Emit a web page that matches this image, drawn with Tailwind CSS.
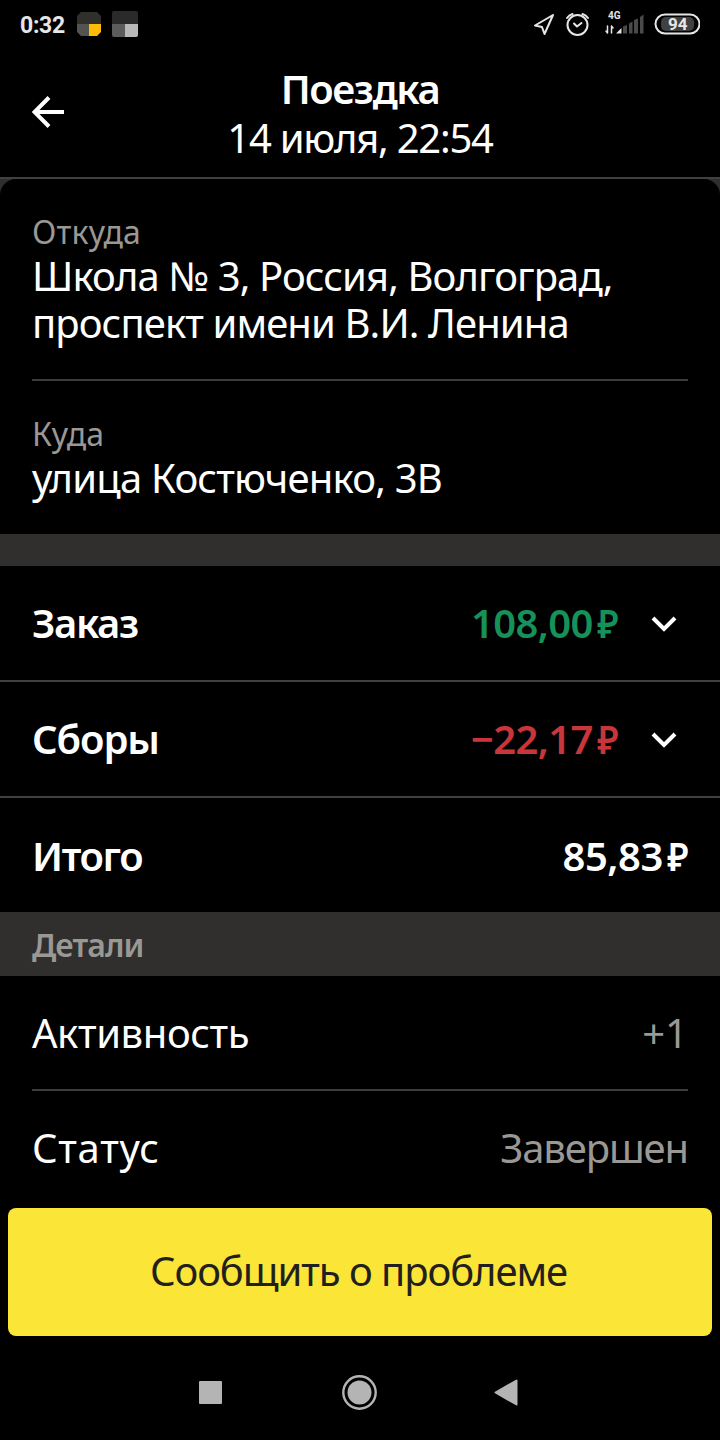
<!DOCTYPE html>
<html lang="ru">
  <head>
    <meta charset="UTF-8" />
    <meta name="viewport" content="width=device-width, initial-scale=1" />
    <title>Поездка</title>
    <script src="https://cdn.jsdelivr.net/npm/@tailwindcss/browser@4"></script>
  </head>
  <body
    class="bg-black text-white w-[720px] h-[1440px] overflow-hidden flex flex-col font-['Noto_Sans',sans-serif] text-[40px] leading-[48px]"
  >
    <!-- Status bar -->
    <div class="h-12 shrink-0 flex items-center justify-between pl-5 pr-5">
      <div class="flex items-center">
        <span
          class="w-[57px] font-['Roboto'] font-bold text-[23px] leading-6 tracking-[-0.3px] text-[#e6e6e6] pt-[3px]"
          >0:32</span
        >
        <svg class="w-6 h-6" viewBox="0 0 24 24">
          <clipPath id="app"><path d="M4 0 H20 L24 4 V20 L20 24 H4 L0 20 V4 Z" /></clipPath>
          <g clip-path="url(#app)">
            <rect width="24" height="12" fill="#302f2b" />
            <rect y="12" width="12" height="12" fill="#54534f" />
            <rect x="12" y="12" width="12" height="12" fill="#fdbb08" />
          </g>
        </svg>
        <svg class="ml-[11px] w-[26px] h-[26px]" viewBox="0 0 26 26">
          <clipPath id="app2"><rect width="26" height="26" rx="2" /></clipPath>
          <g clip-path="url(#app2)">
            <rect width="26" height="13" fill="#2a2a2a" />
            <rect y="13" width="13" height="13" fill="#5c5c5c" />
            <rect x="13" y="13" width="13" height="13" fill="#b8b8b8" />
          </g>
        </svg>
      </div>
      <svg
        class="w-[170px] h-12"
        viewBox="530 0 170 48"
        fill="none"
        stroke="#e6e6e6"
        stroke-width="2"
        stroke-linejoin="round"
        stroke-linecap="round"
      >
        <path d="M553 15 L535 25.5 L542 27 L544.5 34 Z" />
        <circle cx="577.5" cy="25" r="10" />
        <path d="M574 23.5 L577 26.5 L581.5 23" />
        <path d="M567 18 Q569 15 572.5 14 M582.5 14 Q586 15 588 18" />
        <g stroke-width="1.5">
          <path d="M607.5 26 V33 L606 31 M611.5 33 V26 L613 28" />
        </g>
        <path d="M616 33.5 L621.5 28 V33.5 Z" fill="#e6e6e6" stroke="none" />
        <g fill="#4a4a4a" stroke="none">
          <path d="M623 26.5 L627 25 V33.5 H623 Z" />
          <path d="M629 23.5 L632.5 21.5 V33.5 H629 Z" />
          <path d="M634 20 L638 18.5 V33.5 H634 Z" />
          <path d="M640 17 L643.5 14.5 V33.5 H640 Z" />
        </g>
        <rect x="655.5" y="14.5" width="44" height="19" rx="9.5" />
        <rect x="661" y="17" width="33" height="14" rx="5" fill="#404040" stroke="none" />
        <g fill="#e6e6e6" stroke="none" font-family="Roboto" font-weight="700">
          <text x="608" y="19" font-size="10">4G</text>
          <text x="668" y="30" font-size="17">94</text>
        </g>
      </svg>
    </div>

    <!-- Header -->
    <header
      class="h-[131px] shrink-0 border-b-2 border-[#404040] grid grid-cols-[96px_1fr_96px] items-center"
    >
      <svg
        class="ml-8 mb-0.5 w-8 h-8"
        viewBox="0 0 32 32"
        fill="none"
        stroke="white"
        stroke-width="4"
      >
        <path d="M32 16 H3 M17 1.5 L2.5 16 L17 30.5" />
      </svg>
      <div class="text-center pt-0.5">
        <h1 class="font-semibold tracking-[-1.4px]">Поездка</h1>
        <p class="tracking-[-1.25px] leading-[49px]">14 июля, 22:54</p>
      </div>
    </header>

    <!-- Addresses -->
    <div class="shrink-0 bg-[#302f2d] pb-8">
      <section class="h-[355px] bg-black rounded-t-[16px] px-8 pt-[33px]">
        <div class="h-[169px] border-b-2 border-[#3c3c3c]">
          <p class="text-[32px] leading-10 tracking-[0.15px] text-[#9a9894]">Откуда</p>
          <p class="leading-[47px] tracking-[-0.9px]">
            Школа № 3, Россия, Волгоград,<br />проспект имени В.И. Ленина
          </p>
        </div>
        <div class="pt-[33px]">
          <p class="text-[32px] leading-10 tracking-[0.15px] text-[#9a9894]">Куда</p>
          <p class="leading-[47px] tracking-[-0.8px]">улица Костюченко, 3В</p>
        </div>
      </section>
    </div>

    <!-- Totals -->
    <section class="shrink-0 font-semibold">
      <div class="h-[116px] border-b-2 border-[#404040] px-8 flex items-center">
        <span class="flex-1 tracking-[-1.4px]">Заказ</span>
        <span class="tracking-[-0.6px] text-[#16915a]"
          >108,00<span class="inline-block origin-right scale-x-90 ml-0.5">₽</span></span
        >
        <svg class="ml-[30px] mr-2 mt-0.5 w-8 h-8" viewBox="0 0 32 32" fill="none" stroke="white" stroke-width="4">
          <path d="M5 10 L16 21 L27 10" />
        </svg>
      </div>
      <div class="h-[116px] border-b-2 border-[#404040] px-8 flex items-center">
        <span class="flex-1 tracking-[-1.1px]">Сборы</span>
        <span class="tracking-[-0.6px] text-[#c8363a]"
          >−22,17<span class="inline-block origin-right scale-x-90 ml-0.5">₽</span></span
        >
        <svg class="ml-[30px] mr-2 mt-0.5 w-8 h-8" viewBox="0 0 32 32" fill="none" stroke="white" stroke-width="4">
          <path d="M5 10 L16 21 L27 10" />
        </svg>
      </div>
      <div class="h-[114px] px-8 pt-0.5 flex items-center">
        <span class="flex-1 tracking-[-1.4px]">Итого</span>
        <span class="tracking-[-0.5px]"
          >85,83<span class="inline-block origin-right scale-x-90 ml-0.5">₽</span></span
        >
      </div>
    </section>

    <!-- Details -->
    <h2
      class="h-16 shrink-0 bg-[#302f2d] px-8 pt-0.5 flex items-center text-[32px] font-semibold tracking-[-0.9px] text-[#9a9894]"
    >
      Детали
    </h2>
    <section class="h-[232px] shrink-0 px-8">
      <div class="h-[115px] border-b-2 border-[#3c3c3c] flex items-center justify-between">
        <span class="tracking-[-0.4px]">Активность</span>
        <span class="text-[#9a9894]">+1</span>
      </div>
      <div class="h-[113px] flex items-center justify-between">
        <span class="tracking-[0.7px]">Статус</span>
        <span class="tracking-[-1.1px] text-[#9a9894]">Завершен</span>
      </div>
    </section>

    <button
      class="mx-2 h-32 shrink-0 rounded-lg bg-[#fbe536] pb-0.5 pr-[3px] tracking-[-1.05px] text-[#21201f]"
    >
      Сообщить о проблеме
    </button>

    <!-- Navigation bar -->
    <nav class="flex-1">
      <svg class="w-[720px] h-[104px]" viewBox="0 0 720 104" fill="#b4b4b4">
        <rect x="199" y="45" width="23" height="23" rx="1" />
        <circle cx="359.5" cy="56.5" r="12" />
        <circle cx="359.5" cy="56.5" r="16.2" fill="none" stroke="#b4b4b4" stroke-width="2.4" />
        <path d="M495.5 56.5 L516.5 44.5 V68.5 Z" stroke="#b4b4b4" stroke-width="2" stroke-linejoin="round" />
      </svg>
    </nav>
  </body>
</html>
